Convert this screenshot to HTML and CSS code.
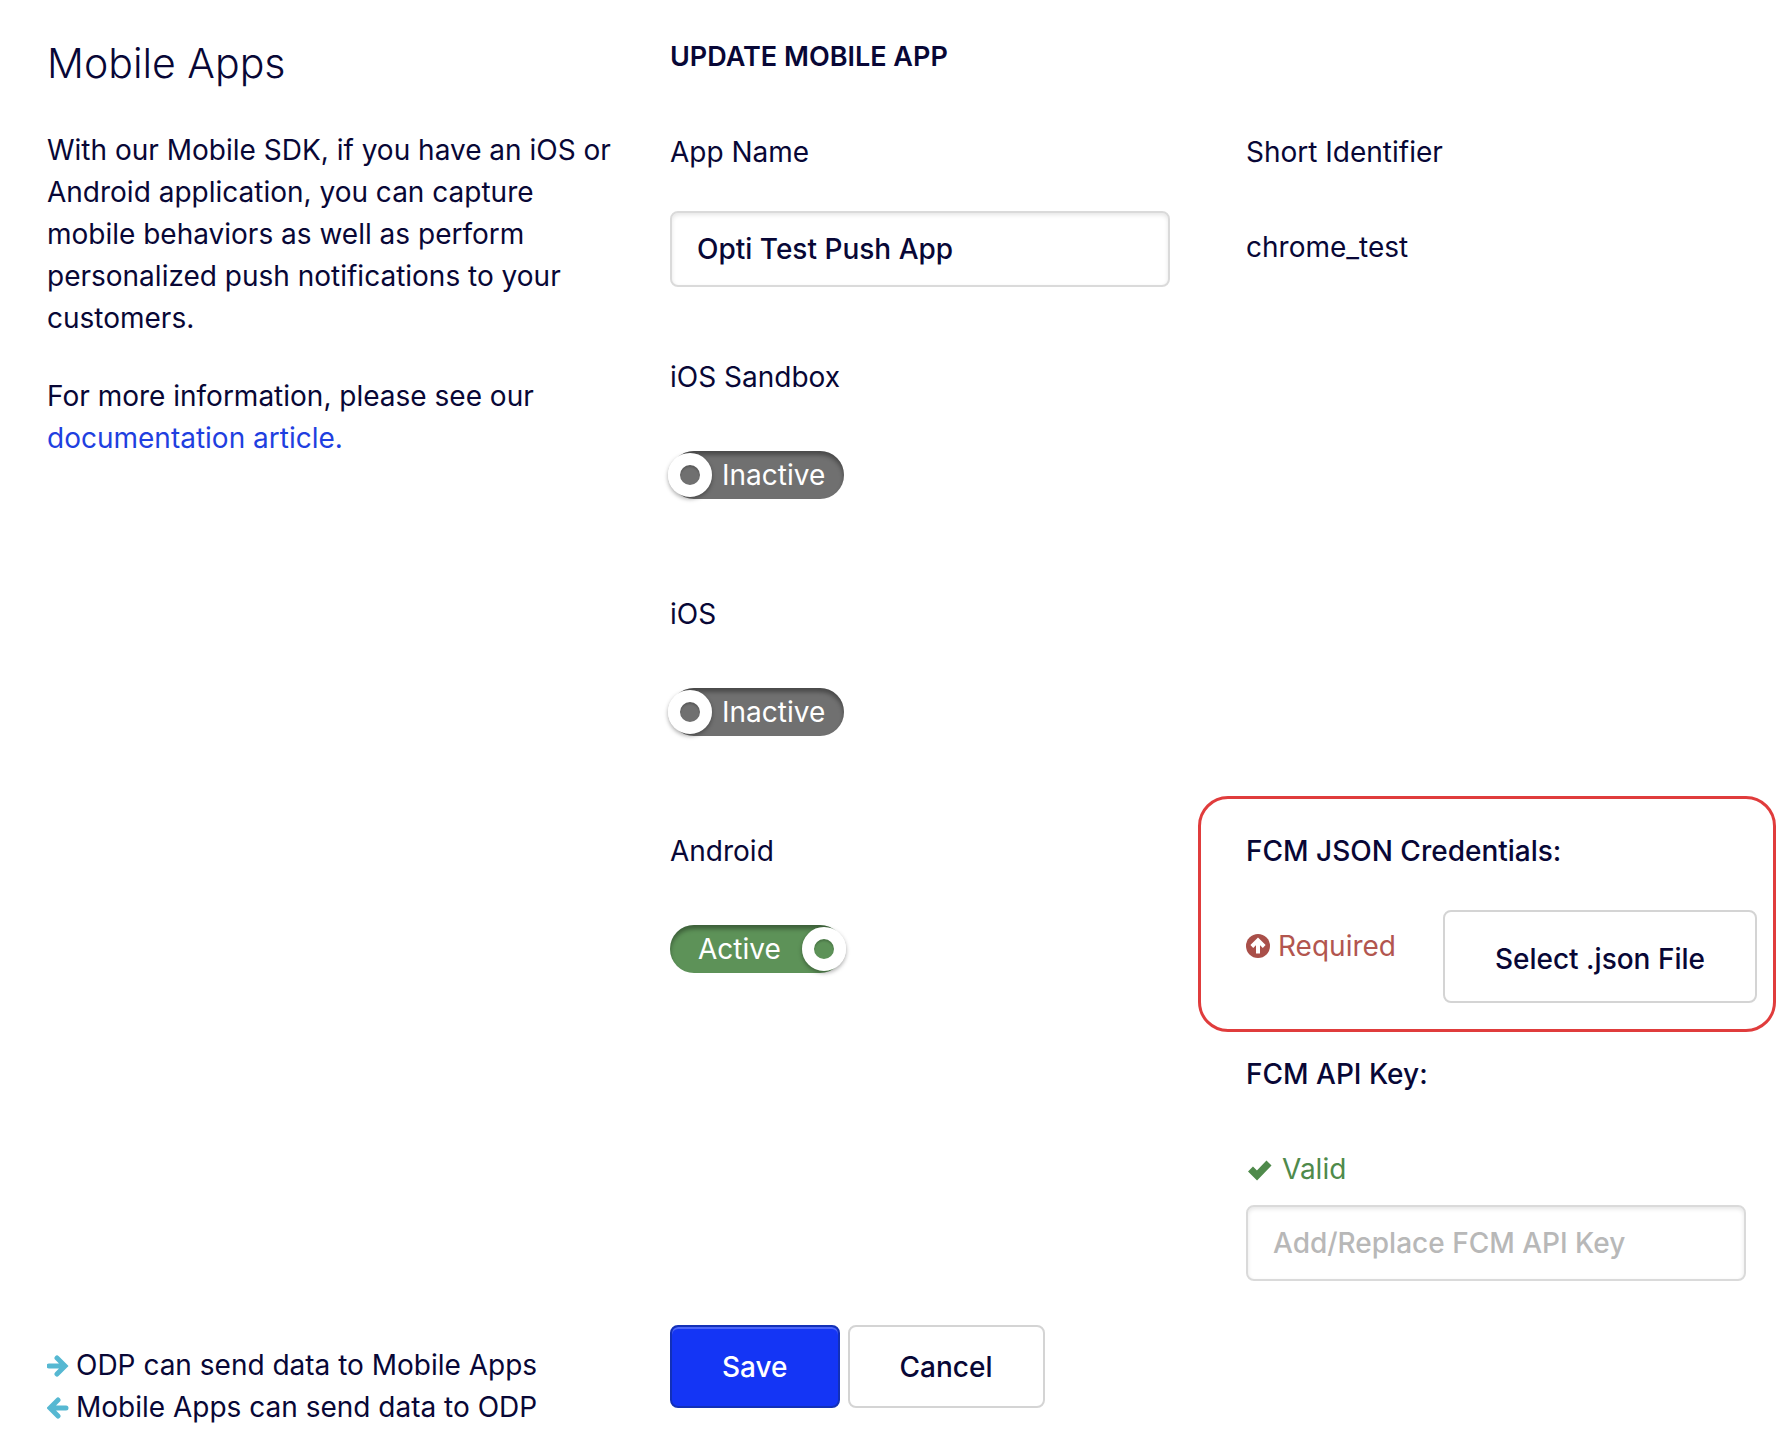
FILE: index.html
```html
<!DOCTYPE html>
<html lang="en">
  <head>
    <meta charset="utf-8">
    <title>Mobile Apps</title>
    <link rel="stylesheet" href="styles.css">
  </head>

  <body>

    <div class="page">
      <aside class="sidebar">
        <div>
          <h1>Mobile Apps</h1>
          <p>With our Mobile SDK, if you have an iOS or Android application, you can capture mobile behaviors as well as perform personalized push notifications to your customers.</p>
          <p>For more information, please see our <a href="#">documentation article.</a></p>
        </div>

        <ul class="directions">
          <li>
            <svg class="arrow" viewBox="0 0 22 24"><path d="M2 13H16M10 5L18 13L10 21"/></svg>
            ODP can send data to Mobile Apps
          </li>
          <li>
            <svg class="arrow" viewBox="0 0 22 24"><path d="M19 13H5M11 5L3 13L11 21"/></svg>
            Mobile Apps can send data to ODP
          </li>
        </ul>
      </aside>

      <form class="app-form">
        <h2>Update Mobile App</h2>

        <div class="row name-row">
          <div>
            <label class="field-label" for="app-name">App Name</label>
            <input class="text-input" id="app-name" type="text" value="Opti Test Push App">
          </div>
          <div>
            <div class="title">Short Identifier</div>
            <div>chrome_test</div>
          </div>
        </div>

        <div class="row toggle-row">
          <div>
            <div class="title">iOS Sandbox</div>
            <label class="toggle">
              <input type="checkbox" class="knob">
              <span>Inactive</span>
            </label>
          </div>
        </div>

        <div class="row toggle-row">
          <div>
            <div class="title">iOS</div>
            <label class="toggle">
              <input type="checkbox" class="knob">
              <span>Inactive</span>
            </label>
          </div>
        </div>

        <div class="row android-row">
          <div>
            <div class="title">Android</div>
            <label class="toggle toggle-on">
              <input type="checkbox" class="knob" checked>
              <span>Active</span>
            </label>
          </div>

          <div>
            <div class="credentials">
              <div class="strong">FCM JSON Credentials:</div>
              <div class="credentials-file">
                <div class="status required">
                  <svg class="status-icon" viewBox="0 0 24 24">
                    <circle cx="12" cy="12" r="12"/>
                    <path d="M12 19.500V7M5.800 12.500L12 6.300L18.200 12.500"/>
                  </svg>
                  Required
                </div>
                <button type="button" class="button file-button">Select .json File</button>
              </div>
            </div>

            <label class="title strong" for="api-key">FCM API Key:</label>
            <div class="status valid">
              <svg class="check-icon" viewBox="0 0 28 24"><path d="M4.500 12L11 18.500L23 6"/></svg>
              Valid
            </div>
            <input class="text-input" id="api-key" type="text" placeholder="Add/Replace FCM API Key">
          </div>
        </div>

        <div class="actions">
          <button type="button" class="button save-button">Save</button>
          <button type="button" class="button">Cancel</button>
        </div>
      </form>
    </div>

  </body>
</html>
```
FILE: styles.css
```css
* {
  box-sizing: border-box;
}
body {
  margin: 0;
  background-color: white;
  color: #080736;
  font-family: Inter, sans-serif;
  font-size: 28px;
  line-height: 42px;
}
.page {
  display: grid;
  grid-template-columns: 623fr 1106fr;
  padding: 36px 15px 24px 47px;
}

/* left side */
.sidebar {
  display: flex;
  flex-direction: column;
  justify-content: space-between;
  padding-right: 56px;
}
h1 {
  margin: 0 0 39px;
  font-size: 41px;
  font-weight: 300;
  line-height: 54px;
}
p {
  margin: 0 0 36px;
}
a {
  color: #1f3fe0;
  text-decoration: none;
}
.directions {
  margin: 0;
  padding: 0;
  list-style: none;
}
.directions li {
  display: flex;
  align-items: center;
  gap: 7px;
  white-space: nowrap;
}
.arrow {
  width: 22px;
  height: 24px;
  fill: none;
  stroke: #56b8d2;
  stroke-width: 5;
  stroke-linecap: round;
}

/* form */
h2 {
  margin: 0 0 53px;
  font-size: 27px;
  font-weight: 600;
  line-height: 42px;
  text-transform: uppercase;
}
.row {
  display: grid;
  grid-template-columns: 576fr 530fr;
}
.name-row {
  margin-bottom: 69px;
}
.toggle-row {
  margin-bottom: 94px;
}
.android-row {
  margin-bottom: 44px;
}
.title {
  display: block;
  margin-bottom: 53px;
}
.field-label {
  display: block;
  margin-bottom: 38px;
}
.strong {
  font-weight: 500;
}
.text-input {
  display: block;
  width: 100%;
  max-width: 500px;
  height: 76px;
  padding: 0 25px;
  border: 2px solid #dadada;
  border-radius: 8px;
  background-color: white;
  box-shadow: inset 0 2px 4px rgba(0, 0, 0, 0.1);
  color: inherit;
  font: inherit;
  font-weight: 500;
}
.text-input::placeholder {
  color: #b8b8b8;
  opacity: 1;
}

.toggle {
  display: flex;
  align-items: center;
  gap: 12px;
  width: 174px;
  height: 48px;
  border-radius: 24px;
  background-color: #707070;
  box-shadow: inset 0 4px 4px rgba(0, 0, 0, 0.35);
  color: white;
  cursor: pointer;
}
.toggle-on {
  flex-direction: row-reverse;
  justify-content: space-between;
  padding-left: 28px;
  background-color: #5d9258;
}
.knob {
  appearance: none;
  flex: none;
  width: 44px;
  height: 44px;
  margin: 0 -2px;
  border: 12px solid white;
  border-radius: 50%;
  box-shadow: 0 2px 4px rgba(0, 0, 0, 0.35), inset 0 2px 2px rgba(0, 0, 0, 0.2);
}

.credentials {
  margin: -34px 0 21px -48px;
  padding: 31px 16px 26px 45px;
  border: 3px solid #e03c3c;
  border-radius: 30px;
}
.credentials-file {
  display: flex;
  justify-content: space-between;
  align-items: flex-start;
  margin-top: 38px;
}
.status {
  display: flex;
  align-items: center;
  gap: 8px;
}
.required {
  margin-top: 15px;
  color: #b2564f;
}
.valid {
  margin-bottom: 15px;
  color: #4f8a4b;
}
.status-icon {
  width: 24px;
  height: 24px;
  fill: #a94f49;
}
.status-icon path {
  fill: none;
  stroke: white;
  stroke-width: 4;
}
.check-icon {
  width: 28px;
  height: 24px;
  fill: none;
  stroke: #4f8a4b;
  stroke-width: 7;
}

.button {
  height: 83px;
  padding: 0 50px;
  border: 2px solid #d4d4d4;
  border-radius: 8px;
  background-color: white;
  color: inherit;
  font: inherit;
  font-weight: 500;
  cursor: pointer;
}
.file-button {
  height: 93px;
  padding-top: 4px;
}
.save-button {
  border-color: #1230b8;
  background-color: #1435f5;
  box-shadow: inset 0 2px 0 #4c66f8;
  color: white;
}
.actions {
  display: flex;
  gap: 8px;
  padding-bottom: 20px;
}
```
